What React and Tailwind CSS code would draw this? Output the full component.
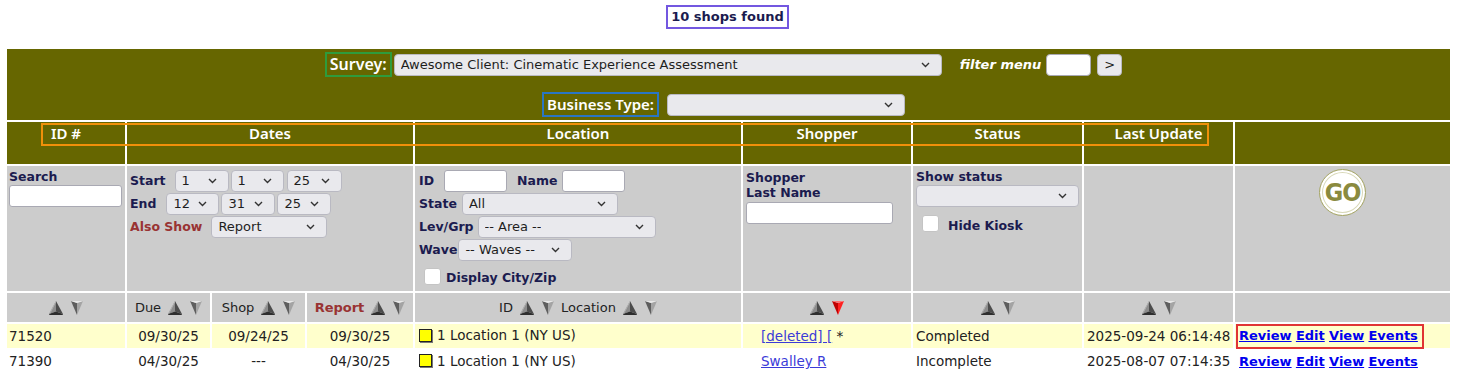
import React from "react";

// small chevron used in the select boxes
const Chevron = () => (
  <svg width="9" height="6" viewBox="0 0 9 6" className="shrink-0">
    <polyline points="1,1 4.5,4.5 8,1" fill="none" stroke="#333" strokeWidth="1.4" />
  </svg>
);

const Select = ({ value = "", className = "", block = false }) => (
  <div
    className={`${block ? "flex" : "inline-flex"} items-center justify-between h-[22px] rounded-[4px] border border-[#b9b9c2] bg-[#e9e9ed] pl-[6px] pr-[11px] text-[13px] leading-[20px] text-[#1e1e1e] font-normal ${className}`}
  >
    <span className="whitespace-nowrap overflow-hidden">{value}</span>
    <Chevron />
  </div>
);

const TextBox = ({ className = "" }) => (
  <div className={`h-[22px] bg-white rounded-[3px] border border-[#a9a9b3] ${className}`} />
);

const Check = ({ className = "" }) => (
  <div className={`w-[17px] h-[17px] shrink-0 bg-white rounded-[3px] border border-[#c4c4c4] ${className}`} />
);

// sort arrows
const Up = () => (
  <svg width="14" height="14" viewBox="0 0 14 14" className="block">
    <polygon points="7,0 0,13 7,10.5" fill="#8c8c8c" />
    <polygon points="7,0 14,13 7,10.5" fill="#4c4c4c" />
    <polygon points="0,13 7,10.5 14,13 13.5,14 0.5,14" fill="#2e2e2e" />
    <polyline points="7,0.5 0.8,12.6" fill="none" stroke="#b8b8b8" strokeWidth="0.8" />
  </svg>
);

const Down = ({ red = false }) => (
  <svg width="12" height="14" viewBox="0 0 12 14" className="block">
    <polygon points="0,0 6,2 6,14" fill={red ? "#c00000" : "#5e5e5e"} />
    <polygon points="6,2 12,0 6,14" fill={red ? "#ff2020" : "#a4a4a4"} />
    <polygon points="0,0 12,0 6,2" fill={red ? "#ff7070" : "#e8e8e8"} />
  </svg>
);

const Arrows = ({ red = false }) => (
  <span className="inline-flex items-center gap-[8px] align-middle">
    <Up />
    <Down red={red} />
  </span>
);

const Label = ({ children, className = "" }) => (
  <span className={`font-bold text-[12.5px] text-[#1b1b4f] whitespace-nowrap ${className}`}>{children}</span>
);

const Link = ({ children, bold = false }) => (
  <a href="#" className={`underline ${bold ? "font-bold text-[13px] text-[#0000ee]" : "text-[#3b3bd8]"}`}>
    {children}
  </a>
);

const rows = [
  {
    id: "71520",
    due: "09/30/25",
    shop: "09/24/25",
    report: "09/30/25",
    loc: "1 Location 1 (NY US)",
    shopper: "[deleted] [",
    star: true,
    status: "Completed",
    updated: "2025-09-24 06:14:48",
    bg: "bg-[#ffffcc]",
  },
  {
    id: "71390",
    due: "04/30/25",
    shop: "---",
    report: "04/30/25",
    loc: "1 Location 1 (NY US)",
    shopper: "Swalley R",
    star: false,
    status: "Incomplete",
    updated: "2025-08-07 07:14:35",
    bg: "bg-white",
  },
];

export default function App() {
  const head = "bg-[#666600] text-white font-['Noto_Sans',sans-serif] font-semibold text-[15px] leading-[20px] align-top pt-[1px] h-[42px] p-0 text-center";
  const filt = "bg-[#cccccc] align-top p-0 h-[125px]";
  const sort = "bg-[#cccccc] h-[29px] p-0 text-center text-[13px] text-[#222]";

  return (
    <div className="relative w-[1457px] h-[374px] bg-white overflow-hidden font-['DejaVu_Sans',Verdana,sans-serif] text-[#222]">
      <div className="flex justify-center pt-[5px]">
        <div className="border-2 border-[#7357e0] h-[24px] px-[3px] leading-[20px] font-bold text-[13px] text-[#1b1b4f] ml-[-2px]">
          10 shops found
        </div>
      </div>

      <table className="mt-[18px] ml-[5px] border-separate border-spacing-[2px] table-fixed w-[1447px]">
        <colgroup>
          <col className="w-[118px]" />
          <col className="w-[83px]" />
          <col className="w-[93px]" />
          <col className="w-[106px]" />
          <col className="w-[326px]" />
          <col className="w-[168px]" />
          <col className="w-[169px]" />
          <col className="w-[149px]" />
          <col className="w-[215px]" />
        </colgroup>
        <tbody>
          <tr>
            <td colSpan={9} className="bg-[#666600] h-[71px] p-0 align-top">
              <div className="flex flex-col items-center pt-[3px]">
                <div className="flex items-center h-[25px] mr-[10px]">
                  <span className="border-2 border-[#2e9b3c] h-[25px] px-[3px] leading-[20px] text-white font-['Noto_Sans',sans-serif] font-semibold text-[16px]">
                    Survey:
                  </span>
                  <Select className="ml-[2px] w-[548px]" value="Awesome Client: Cinematic Experience Assessment" />
                  <span className="ml-[18px] italic font-bold text-white text-[13px]">filter menu</span>
                  <TextBox className="ml-[5px] w-[45px] rounded-[4px]" />
                  <div className="ml-[6px] w-[25px] h-[22px] rounded-[4px] bg-[#e9e9ed] border border-[#b9b9c2] flex items-center justify-center text-[13px] text-[#222]">
                    &gt;
                  </div>
                </div>
                <div className="flex items-center h-[25px] mt-[15px] mr-[10px]">
                  <span className="border-2 border-[#2a76c4] h-[25px] px-[3px] leading-[20px] text-white font-['Noto_Sans',sans-serif] font-semibold text-[15px]">
                    Business Type:
                  </span>
                  <Select className="ml-[8px] w-[238px]" />
                </div>
              </div>
            </td>
          </tr>

          <tr>
            <th className={head}>ID #</th>
            <th colSpan={3} className={head}>Dates</th>
            <th className={head}>Location</th>
            <th className={head}>Shopper</th>
            <th className={head}>Status</th>
            <th className={head}>Last Update</th>
            <th className={head}></th>
          </tr>

          <tr>
            <td className={`${filt} pl-[2px] pt-[3px]`}>
              <div className="h-[16px] leading-[16px] text-[12.5px]"><Label>Search</Label></div>
              <TextBox className="w-[113px]" />
            </td>
            <td colSpan={3} className={`${filt} pl-[3px] pt-[4px]`}>
              <div className="flex items-center gap-[2px]">
                <Label className="mr-[7px]">Start</Label>
                <Select className="w-[54px]" value="1" />
                <Select className="w-[53px]" value="1" />
                <Select className="w-[55px] ml-[1px]" value="25" />
              </div>
              <div className="flex items-center gap-[2px] mt-[1px]">
                <Label className="mr-[8px]">End</Label>
                <Select className="w-[53px]" value="12" />
                <Select className="w-[54px]" value="31" />
                <Select className="w-[54px]" value="25" />
              </div>
              <div className="flex items-center mt-[1px]">
                <Label className="mr-[9px] text-[#993333]">Also Show</Label>
                <Select className="w-[116px]" value="Report" />
              </div>
            </td>
            <td className={`${filt} pl-[4px] pt-[4px]`}>
              <div className="flex items-center">
                <Label>ID</Label>
                <TextBox className="ml-[10px] w-[63px]" />
                <Label className="ml-[10px]">Name</Label>
                <TextBox className="ml-[5px] w-[63px]" />
              </div>
              <div className="flex items-center mt-[1px]">
                <Label>State</Label>
                <Select className="ml-[5px] w-[156px]" value="All" />
              </div>
              <div className="flex items-center mt-[1px]">
                <Label>Lev/Grp</Label>
                <Select className="ml-[4px] w-[178px]" value="-- Area --" />
              </div>
              <div className="flex items-center mt-[1px]">
                <Label>Wave</Label>
                <Select className="ml-[1px] w-[114px]" value="-- Waves --" />
              </div>
              <div className="flex items-end mt-[5px] pl-[5px] h-[19px]">
                <Check />
                <Label className="ml-[5px] leading-[14px]">Display City/Zip</Label>
              </div>
            </td>
            <td className={`${filt} pl-[3px] pt-[4px]`}>
              <div className="h-[15px] leading-[15px] text-[12.5px]"><Label>Shopper</Label></div>
              <div className="h-[16px] leading-[16px] text-[12.5px]"><Label>Last Name</Label></div>
              <TextBox className="w-[147px] mt-[1px]" />
            </td>
            <td className={`${filt} pl-[3px] pt-[3px]`}>
              <div className="h-[16px] leading-[16px] text-[12.5px]"><Label>Show status</Label></div>
              <Select block className="w-[163px]" />
              <div className="flex items-center mt-[4px] pl-[6px]">
                <Check />
                <Label className="ml-[9px] mt-[6px]">Hide Kiosk</Label>
              </div>
            </td>
            <td className={filt}></td>
            <td className={`${filt} pt-[3px]`}>
              <div className="flex justify-center">
                <div className="w-[47px] h-[47px] rounded-full bg-white border border-[#a4a464] shadow-[inset_0_0_0_2px_#ffffff,inset_0_0_0_3px_#d8d8b8] flex items-center justify-center">
                  <span className="font-['DejaVu_Sans_Condensed','Liberation_Sans_Narrow',sans-serif] font-bold text-[25px] leading-none text-[#8a8a3e] tracking-[-1px]">
                    GO
                  </span>
                </div>
              </div>
            </td>
          </tr>

          <tr>
            <td className={sort}><Arrows /></td>
            <td className={sort}>
              <span className="inline-flex items-center gap-[7px]">Due <Arrows /></span>
            </td>
            <td className={sort}>
              <span className="inline-flex items-center gap-[7px]">Shop <Arrows /></span>
            </td>
            <td className={sort}>
              <span className="inline-flex items-center gap-[7px]">
                <span className="font-bold text-[#993333]">Report</span> <Arrows />
              </span>
            </td>
            <td className={sort}>
              <span className="inline-flex items-center gap-[7px]">
                ID <Arrows /> Location <Arrows />
              </span>
            </td>
            <td className={sort}><Arrows red /></td>
            <td className={sort}><Arrows /></td>
            <td className={sort}><Arrows /></td>
            <td className={sort}></td>
          </tr>

          {rows.map((r) => {
            const c = `${r.bg} h-[22px] p-0 text-[13.5px] leading-[22px] whitespace-nowrap`;
            return (
              <tr key={r.id}>
                <td className={`${c} pl-[2px]`}>{r.id}</td>
                <td className={`${c} text-center`}>{r.due}</td>
                <td className={`${c} text-center`}>{r.shop}</td>
                <td className={`${c} text-center`}>{r.report}</td>
                <td className={`${c} pl-[4px]`}>
                  <span className="inline-flex items-center">
                    <span className="inline-block w-[13px] h-[13px] bg-[#ffff00] border border-[#222] shadow-[1px_1px_0_#777]" />
                    <span className="ml-[5px]">{r.loc}</span>
                  </span>
                </td>
                <td className={`${c} pl-[18px]`}>
                  <Link>{r.shopper}</Link>
                  {r.star && <span> *</span>}
                </td>
                <td className={`${c} pl-[3px]`}>{r.status}</td>
                <td className={`${c} pl-[3px]`}>{r.updated}</td>
                <td className={`${c} pl-[4px]`}>
                  <Link bold>Review</Link> <Link bold>Edit</Link> <Link bold>View</Link>{" "}
                  <Link bold>Events</Link>
                </td>
              </tr>
            );
          })}
        </tbody>
      </table>

      {/* annotation boxes lying over the table */}
      <div className="absolute left-[41px] top-[123px] w-[1168px] h-[23px] border-2 border-[#f0900a] pointer-events-none" />
      <div className="absolute left-[1236px] top-[324px] w-[188px] h-[25px] border-2 border-[#e03434] pointer-events-none" />
    </div>
  );
}
